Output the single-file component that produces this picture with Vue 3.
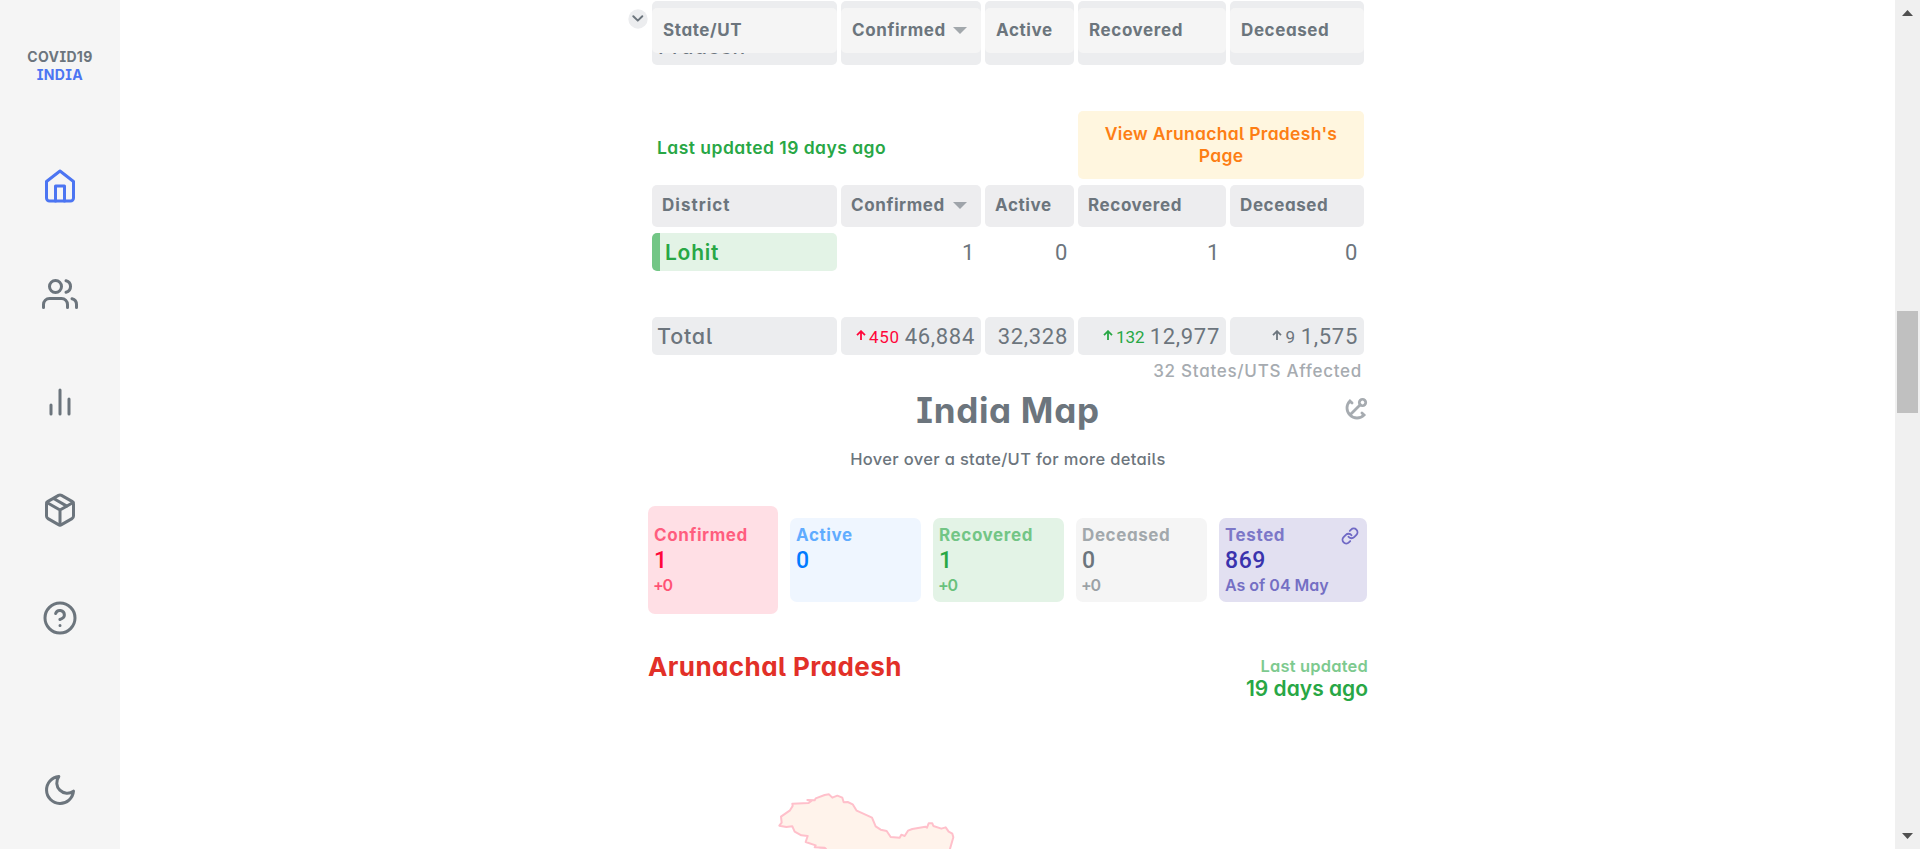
<script setup>
const heads = ['Confirmed', 'Active', 'Recovered', 'Deceased']
const districtValues = ['1', '0', '1', '0']
const totals = [
  { delta: '450', value: '46,884', tone: 'red' },
  { value: '32,328', tone: 'none' },
  { delta: '132', value: '12,977', tone: 'green' },
  { delta: '9', value: '1,575', tone: 'grey' },
]
const cards = [
  { tone: 'confirmed', name: 'Confirmed', value: '1', note: '+0' },
  { tone: 'active', name: 'Active', value: '0', note: '' },
  { tone: 'recovered', name: 'Recovered', value: '1', note: '+0' },
  { tone: 'deceased', name: 'Deceased', value: '0', note: '+0' },
  { tone: 'tested', name: 'Tested', value: '869', note: 'As of 04 May' },
]
</script>

<template>
  <div class="page">
    <aside class="sidebar">
      <div class="logo"><span>COVID19</span><span class="blue">INDIA</span></div>
      <nav>
        <svg class="icon blue" viewBox="0 0 24 24"><path d="M3 9l9-7 9 7v11a2 2 0 0 1-2 2H5a2 2 0 0 1-2-2z" /><path d="M9 22V12h6v10" /></svg>
        <svg class="icon" viewBox="0 0 24 24"><path d="M17 21v-2a4 4 0 0 0-4-4H5a4 4 0 0 0-4 4v2" /><circle cx="9" cy="7" r="4" /><path d="M23 21v-2a4 4 0 0 0-3-3.87M16 3.13a4 4 0 0 1 0 7.75" /></svg>
        <svg class="icon" viewBox="0 0 24 24"><path d="M18 20V10M12 20V4M6 20v-6" /></svg>
        <svg class="icon" viewBox="0 0 24 24"><path d="M16.5 9.4l-9-5.19M21 16V8a2 2 0 0 0-1-1.73l-7-4a2 2 0 0 0-2 0l-7 4A2 2 0 0 0 3 8v8a2 2 0 0 0 1 1.73l7 4a2 2 0 0 0 2 0l7-4A2 2 0 0 0 21 16z" /><path d="M3.27 6.96L12 12.01l8.73-5.05M12 22.08V12" /></svg>
        <svg class="icon" viewBox="0 0 24 24"><circle cx="12" cy="12" r="10" /><path d="M9.09 9a3 3 0 0 1 5.83 1c0 2-3 3-3 3M12 17h.01" /></svg>
      </nav>
      <svg class="icon moon" viewBox="0 0 24 24"><path d="M21 12.79A9 9 0 1 1 11.21 3 7 7 0 0 0 21 12.79z" /></svg>
    </aside>

    <main>
      <section class="table">
        <div class="state-area">
          <div class="row state-row">
            <div class="cell top"><span class="state-name">Pradesh</span></div>
            <div v-for="h in heads" :key="h" class="cell"></div>
          </div>
          <div class="row sticky">
            <div class="cell head"><span>State/UT</span></div>
            <div v-for="h in heads" :key="h" class="cell head">
              <span>{{ h }}</span>
              <svg v-if="h === 'Confirmed'" class="caret" viewBox="0 0 14 7"><path d="M0 0h14L7 7z" /></svg>
            </div>
          </div>
          <svg class="toggle" viewBox="0 0 20 20"><circle cx="10" cy="10" r="9.7" /><path d="M5.3 7.3l4.5 4.3 4.5-4.3" /></svg>
        </div>

        <div class="row info">
          <span class="updated">Last updated 19 days ago</span>
          <div class="view">View Arunachal Pradesh's<br />Page</div>
        </div>

        <div class="row district-head">
          <div class="cell head"><span class="t-district">District</span></div>
          <div v-for="h in heads" :key="h" class="cell head">
            <span>{{ h }}</span>
            <svg v-if="h === 'Confirmed'" class="caret wide" viewBox="0 0 14 7"><path d="M0 0h14L7 7z" /></svg>
          </div>
        </div>

        <div class="row district">
          <div class="cell lohit"><span>Lohit</span></div>
          <div v-for="(v, i) in districtValues" :key="i" class="num">{{ v }}</div>
        </div>

        <div class="row total">
          <div class="cell"><span class="t-total">Total</span></div>
          <div v-for="t in totals" :key="t.value" class="cell num">
            <span v-if="t.delta" class="delta" :class="t.tone">
              <svg viewBox="0 0 10 11"><path d="M5 10V1.4M1 5.2l4-4 4 4" /></svg>{{ t.delta }}
            </span>
            <span>{{ t.value }}</span>
          </div>
        </div>
        <div class="affected"><span>32 States/UTS Affected</span></div>
      </section>

      <section class="map">
        <header>
          <h1>India Map</h1>
          <svg class="anchor" viewBox="0 0 24 24"><g transform="rotate(45 12 12)"><circle cx="12" cy="4.2" r="3.2" /><path d="M12 22V7.4M5 12H2a10 10 0 0 0 20 0h-3" /></g></svg>
        </header>
        <p class="hint"><span>Hover over a state/UT for more details</span></p>

        <div class="cards">
          <div v-for="c in cards" :key="c.tone" class="card" :class="c.tone">
            <span class="name">{{ c.name }}</span>
            <span class="value">{{ c.value }}</span>
            <span class="note">{{ c.note }}</span>
            <svg v-if="c.tone === 'tested'" class="link" viewBox="0 0 24 24"><path d="M10 13a5 5 0 0 0 7.54.54l3-3a5 5 0 0 0-7.07-7.07l-1.72 1.71" /><path d="M14 11a5 5 0 0 0-7.54-.54l-3 3a5 5 0 0 0 7.07 7.07l1.71-1.71" /></svg>
          </div>
        </div>

        <div class="region">
          <h2>Arunachal Pradesh</h2>
          <div class="when"><span class="when-label">Last updated</span><span class="when-value">19 days ago</span></div>
        </div>

        <svg class="shape" viewBox="0 0 1200 237"><path d="M535 240 L558 237 L554 233 L524 232 L527 226 L497 216 L503 198 L484 196 L464 185 L457 169 L439 171 L418 167 L425 158 L423 140 L450 121 L458 108 L457 101 L506 99 L514 93 L502 90 L524 91 L527 85 L554 75 L567 73 L577 83 L592 77 L607 83 L611 97 L623 96 L638 103 L650 122 L696 143 L707 169 L722 179 L740 183 L752 201 L779 203 L784 194 L794 198 L804 182 L817 177 L856 170 L861 173 L866 160 L877 160 L880 168 L904 176 L917 172 L926 185 L937 191 L940 202 L929 240z" /></svg>
      </section>
    </main>

    <div class="scrollbar">
      <svg viewBox="0 0 11 6"><path d="M0 6L5.5 0 11 6z" /></svg>
      <div class="thumb"></div>
      <svg viewBox="0 0 11 6"><path d="M0 0h11L5.5 6z" /></svg>
    </div>
  </div>
</template>

<style>
body { background: #fff; }
</style>

<style scoped>
* { box-sizing: border-box; }
.page {
  display: flex; width: 100%; height: 849px; overflow: hidden;
  font-family: Inter, "Liberation Sans", sans-serif; font-feature-settings: "cv11", "cv05", "cv08";
  color: #6c757d; white-space: nowrap;
}
.sidebar { width: 120px; background: #f5f5f5; display: flex; flex-direction: column; align-items: center; padding-top: 48px; }
.logo { display: flex; flex-direction: column; align-items: center; font-size: 14px; line-height: 18px; font-weight: 700; letter-spacing: .35px; }
.blue { color: #4c75f2; }
nav { display: flex; flex-direction: column; gap: 72px; margin-top: 84px; }
.icon { width: 36px; height: 36px; fill: none; stroke: currentColor; stroke-width: 2; stroke-linecap: round; stroke-linejoin: round; display: block; }
.moon { margin-top: 136px; }
main { flex: 1; padding-left: 528px; }
.table { width: 712px; margin-left: 4px; }
.row { display: grid; grid-template-columns: 185px 140px 89px 148px 134px; gap: 4px; }
.cell { background: #ecedef; border-radius: 5px; display: flex; align-items: center; }
.top { align-items: flex-start; }
.state-area { position: relative; height: 65px; padding-top: 1px; }
.state-row { height: 64px; }
.state-name { font-size: 21px; line-height: 26px; font-weight: 500; letter-spacing: .6px; padding: 33px 0 0 6px; }
.sticky { position: absolute; left: 0; top: 8px; height: 45px; width: 100%; }
.sticky .cell { background: #f5f5f5; padding: 0 0 1px 11px; }
.head { font-size: 17px; font-weight: 700; letter-spacing: .6px; }
.t-district { letter-spacing: 1px; }
.caret { width: 14px; height: 7px; fill: #6c757d; opacity: .6; margin-left: 7px; }
.wide { margin-left: 8px; }
.toggle { position: absolute; left: -24.5px; top: 9px; width: 20px; height: 20px; }
.toggle circle { fill: #ecedef; }
.toggle path { fill: none; stroke: #6c757d; stroke-width: 2; stroke-linecap: round; stroke-linejoin: round; }
.info { margin-top: 46px; height: 68px; }
.updated { grid-column: 1 / 4; padding: 26px 0 0 5px; font-size: 17.5px; line-height: 22px; font-weight: 600; letter-spacing: .47px; color: #28a745; }
.view { grid-column: 4 / 6; background: #fff6df; border-radius: 5px; color: #fd7e14; font-size: 17.5px; font-weight: 600; line-height: 22px; letter-spacing: .3px; text-align: center; padding-top: 12px; }
.district-head { margin-top: 6px; height: 42px; }
.district-head .cell { padding: 0 0 2px 10px; background: #ededef; }
.district { margin-top: 6px; height: 38px; }
.lohit { background: #e3f3e6; border-left: 8px solid #73c686; color: #28a745; font-size: 21px; font-weight: 600; letter-spacing: .75px; padding-left: 5px; }
.num { display: flex; align-items: center; justify-content: flex-end; gap: 5px; padding-right: 6px; font-family: Roboto, Inter, sans-serif; font-size: 22px; letter-spacing: .7px; }
.total { margin-top: 46px; height: 38px; }
.t-total { font-size: 21.5px; font-weight: 500; letter-spacing: .8px; padding-left: 5px; }
.delta { display: flex; align-items: center; font-size: 17px; padding-top: 2px; }
.delta svg { width: 10px; height: 11px; fill: none; stroke: currentColor; stroke-width: 1.8; margin: 0 3px 3px 0; }
.red { color: #ff073a; }
.green { color: #28a745; letter-spacing: 0; }
.grey { color: #6c757d; }
.affected { height: 33px; padding: 5px 2px 0 0; text-align: right; font-size: 17px; line-height: 22px; font-weight: 500; letter-spacing: .73px; color: #a6abb0; }
.map { width: 720px; }
.map header { position: relative; height: 45px; }
h1 { margin: 0; text-align: center; font-size: 35px; line-height: 45px; font-weight: 700; letter-spacing: .7px; }
.anchor { position: absolute; right: -1px; top: 8px; width: 24px; height: 24px; fill: none; stroke: #a6abb0; stroke-width: 2.8; stroke-linecap: round; }
.hint { margin: 15px 0 0; height: 24px; line-height: 23px; text-align: center; font-size: 16.5px; font-weight: 500; letter-spacing: .32px; }
.cards { display: flex; align-items: center; gap: 12px; margin-top: 34px; height: 108px; }
.card { position: relative; width: 131px; height: 84px; border-radius: 7px; display: flex; flex-direction: column; padding: 6px 0 0 6px; }
.name { font-size: 17px; line-height: 22px; font-weight: 700; letter-spacing: .6px; opacity: .6; }
.value { font-size: 23px; line-height: 29px; font-weight: 500; font-family: Roboto, Inter, sans-serif; letter-spacing: .6px; }
.note { font-size: 16px; line-height: 20px; font-weight: 600; opacity: .65; letter-spacing: -1.2px; margin-left: -1px; }
.confirmed { width: 130px; height: 108px; padding-top: 18px; background: #ffdfe5; color: #ff073a; }
.active { background: #eff6ff; color: #007bff; }
.recovered { background: #e3f3e6; color: #28a745; }
.deceased { background: #f5f5f5; color: #6c757d; }
.tested { width: 148px; background: #e2e0f1; color: #3a33ad; }
.tested .note { letter-spacing: 0; margin-left: 0; }
.link { position: absolute; right: 8px; top: 9px; width: 18px; height: 18px; fill: none; stroke: #7069c5; stroke-width: 2.5; stroke-linecap: round; }
.region { display: flex; justify-content: space-between; margin-top: 38px; height: 80px; color: #28a745; }
h2 { margin: -1px 0 0; font-size: 26px; line-height: 32px; font-weight: 700; letter-spacing: .42px; color: #e23028; }
.when { display: flex; flex-direction: column; align-items: flex-end; padding: 4px 0 0; }
.when-label { font-size: 16.5px; line-height: 20px; font-weight: 600; letter-spacing: .18px; opacity: .6; }
.when-value { font-size: 21px; line-height: 26px; font-weight: 600; }
.shape { display: block; width: 400px; height: 79px; margin: 38px 0 0 -8px; }
.shape path { fill: #fff3eb; stroke: #ffc0cb; stroke-width: 6; stroke-linejoin: round; }
.scrollbar { width: 25px; background: #f0f0f0; display: flex; flex-direction: column; align-items: center; padding: 10px 0; }
.scrollbar svg { width: 11px; height: 6px; fill: #505050; }
.thumb { width: 21px; height: 102px; margin: 295px 0 420px; background: #c0c0c0; }
</style>
